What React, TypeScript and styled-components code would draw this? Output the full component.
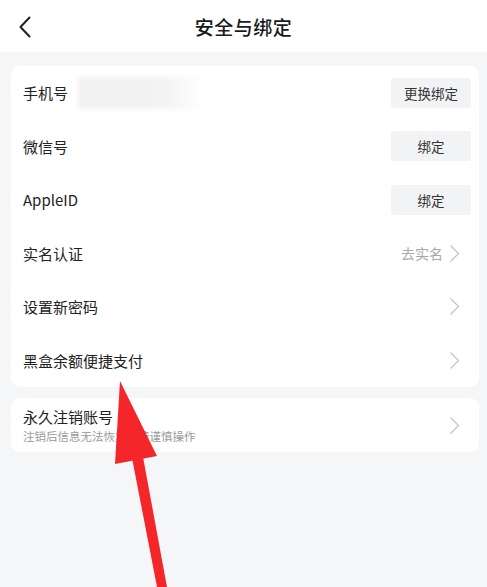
import styled, { createGlobalStyle } from 'styled-components'

const GlobalStyle = createGlobalStyle`
  html, body {
    margin: 0;
    padding: 0;
    background: #f5f6f8;
  }
  * {
    box-sizing: border-box;
  }
`

const Page = styled.div`
  position: relative;
  width: 487px;
  height: 587px;
  overflow: hidden;
  background: #f5f6f8;
  font-family: 'Noto Sans CJK SC', 'Noto Sans', sans-serif;
  color: #222222;
`

const Header = styled.div`
  height: 52px;
  background: #ffffff;
  display: flex;
  align-items: center;
  justify-content: center;
  position: relative;
`

const BackButton = styled.div`
  position: absolute;
  left: 18px;
  top: 15px;
  width: 20px;
  height: 24px;
  display: flex;
  align-items: center;
`

const Title = styled.div`
  font-size: 19px;
  font-weight: 500;
  color: #1a1a1a;
  letter-spacing: 0.5px;
`

const Content = styled.div`
  padding: 14px 8px 0 11px;
  display: flex;
  flex-direction: column;
  gap: 11px;
`

const Card = styled.div`
  background: #ffffff;
  border-radius: 9px;
  display: flex;
  flex-direction: column;
`

const Row = styled.div<{ $height?: number }>`
  height: ${(p) => p.$height ?? 53.5}px;
  display: flex;
  align-items: center;
  padding: 0 8px 0 12px;
`

const Label = styled.div`
  font-size: 15px;
  color: #222222;
  white-space: nowrap;
`

const LabelBlock = styled.div`
  display: flex;
  flex-direction: column;
  gap: 1px;
`

const SubLabel = styled.div`
  font-size: 11.5px;
  color: #9a9a9a;
  white-space: nowrap;
`

const Masked = styled.div`
  margin-left: 10px;
  width: 126px;
  height: 32px;
  background: linear-gradient(90deg, #f1f1f1 0%, #f3f3f3 70%, #ffffff 100%);
  filter: blur(2px);
`

const Spacer = styled.div`
  flex: 1;
`

const ActionButton = styled.div`
  width: 80px;
  height: 30px;
  border-radius: 3px;
  background: #f2f3f5;
  font-size: 13.5px;
  color: #333333;
  display: flex;
  align-items: center;
  justify-content: center;
`

const Hint = styled.div`
  font-size: 14px;
  color: #a8a8a8;
  margin-right: 7px;
`

const ChevronBox = styled.div`
  width: 21px;
  display: flex;
  align-items: center;
  justify-content: flex-start;
`

const Arrow = styled.svg`
  position: absolute;
  left: 0;
  top: 0;
  pointer-events: none;
`

const Chevron = () => (
  <ChevronBox>
    <svg width="10" height="17" viewBox="0 0 10 17" fill="none">
      <path d="M1 1 L8.5 8.5 L1 16" stroke="#c6c6c6" strokeWidth="1.4" strokeLinecap="round" strokeLinejoin="round" />
    </svg>
  </ChevronBox>
)

const App = () => {
  return (
    <Page>
      <GlobalStyle />
      <Header>
        <BackButton>
          <svg width="14" height="22" viewBox="0 0 14 22" fill="none">
            <path d="M11.5 1.5 L2.5 11 L11.5 20.5" stroke="#222" strokeWidth="2" strokeLinecap="round" strokeLinejoin="round" />
          </svg>
        </BackButton>
        <Title>安全与绑定</Title>
      </Header>
      <Content>
        <Card>
          <Row>
            <Label>手机号</Label>
            <Masked />
            <Spacer />
            <ActionButton>更换绑定</ActionButton>
          </Row>
          <Row>
            <Label>微信号</Label>
            <Spacer />
            <ActionButton>绑定</ActionButton>
          </Row>
          <Row>
            <Label>AppleID</Label>
            <Spacer />
            <ActionButton>绑定</ActionButton>
          </Row>
          <Row>
            <Label>实名认证</Label>
            <Spacer />
            <Hint>去实名</Hint>
            <Chevron />
          </Row>
          <Row>
            <Label>设置新密码</Label>
            <Spacer />
            <Chevron />
          </Row>
          <Row>
            <Label>黑盒余额便捷支付</Label>
            <Spacer />
            <Chevron />
          </Row>
        </Card>
        <Card>
          <Row $height={54}>
            <LabelBlock>
              <Label>永久注销账号</Label>
              <SubLabel>注销后信息无法恢复，请谨慎操作</SubLabel>
            </LabelBlock>
            <Spacer />
            <Chevron />
          </Row>
        </Card>
      </Content>
      <Arrow width="487" height="587" viewBox="0 0 487 587">
        <polygon points="120,381 115,464 157,456" fill="#f5262a" />
        <polygon points="132,458 143,457 167,587 157,587" fill="#f5262a" />
      </Arrow>
    </Page>
  )
}

export default App
